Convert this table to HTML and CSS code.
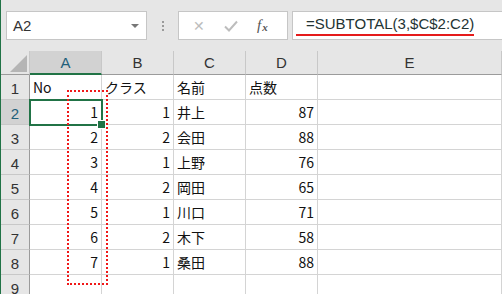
FILE: index.html
```html
<!DOCTYPE html>
<html lang="ja">
<head>
    <meta charset="UTF-8">
    <title>SUBTOTAL</title>
    <link rel="stylesheet" href="styles.css">
</head>
<body>
    <div class="app">
        <div class="formula-bar">
            <div class="name-box">
                <span>A2</span>
                <span class="drop"></span>
            </div>
            <div class="grip"><i></i><i></i><i></i></div>
            <div class="buttons">
                <span class="btn cancel">&#x2715;</span>
                <span class="btn enter">
                    <svg width="14" height="12" viewBox="0 0 14 12"><path d="M1 6.5 L5 10.5 L13 1.5" fill="none" stroke="#bdbdbd" stroke-width="2"/></svg>
                </span>
                <span class="btn fx"><i>f</i><small>x</small></span>
            </div>
            <div class="formula">
                <span class="mark">=SUBTOTAL(3,$C$2:C2)</span>
            </div>
        </div>

        <div class="sheet">
            <div class="corner"><span class="tri"></span></div>
            <div class="col-head active">A</div>
            <div class="col-head">B</div>
            <div class="col-head">C</div>
            <div class="col-head">D</div>
            <div class="col-head">E</div>

            <div class="row-head">1</div>
            <div class="cell">No</div>
            <div class="cell">クラス</div>
            <div class="cell">名前</div>
            <div class="cell">点数</div>
            <div class="cell"></div>

            <div class="row-head active">2</div>
            <div class="cell num selected">1</div>
            <div class="cell num">1</div>
            <div class="cell">井上</div>
            <div class="cell num">87</div>
            <div class="cell"></div>

            <div class="row-head">3</div>
            <div class="cell num">2</div>
            <div class="cell num">2</div>
            <div class="cell">会田</div>
            <div class="cell num">88</div>
            <div class="cell"></div>

            <div class="row-head">4</div>
            <div class="cell num">3</div>
            <div class="cell num">1</div>
            <div class="cell">上野</div>
            <div class="cell num">76</div>
            <div class="cell"></div>

            <div class="row-head">5</div>
            <div class="cell num">4</div>
            <div class="cell num">2</div>
            <div class="cell">岡田</div>
            <div class="cell num">65</div>
            <div class="cell"></div>

            <div class="row-head">6</div>
            <div class="cell num">5</div>
            <div class="cell num">1</div>
            <div class="cell">川口</div>
            <div class="cell num">71</div>
            <div class="cell"></div>

            <div class="row-head">7</div>
            <div class="cell num">6</div>
            <div class="cell num">2</div>
            <div class="cell">木下</div>
            <div class="cell num">58</div>
            <div class="cell"></div>

            <div class="row-head">8</div>
            <div class="cell num">7</div>
            <div class="cell num">1</div>
            <div class="cell">桑田</div>
            <div class="cell num">88</div>
            <div class="cell"></div>

            <div class="row-head">9</div>
            <div class="cell"></div>
            <div class="cell"></div>
            <div class="cell"></div>
            <div class="cell"></div>
            <div class="cell"></div>

            <div class="dotted-box"></div>
        </div>
    </div>
</body>
</html>
```

FILE: styles.css
```css
* {
    margin: 0;
    padding: 0;
    box-sizing: border-box;
}

body {
    width: 502px;
    height: 294px;
    overflow: hidden;
    background: #fff;
    font-family: 'Noto Sans CJK JP', 'Noto Sans', sans-serif;
    color: #222;
}

.app {
    height: 294px;
    border-left: 1px solid #217346;
    overflow: hidden;
}

/* formula bar */

.formula-bar {
    height: 51px;
    background: #e6e6e6;
    display: flex;
    align-items: flex-start;
    padding: 11px 0 0 5px;
}

.name-box {
    width: 141px;
    height: 29px;
    background: #fff;
    border: 1px solid #c6c6c6;
    display: flex;
    align-items: center;
    justify-content: space-between;
    padding: 0 7px 0 6px;
    font-family: 'Liberation Sans', sans-serif;
    font-size: 15px;
    color: #333;
}

.drop {
    width: 0;
    height: 0;
    border-left: 4px solid transparent;
    border-right: 4px solid transparent;
    border-top: 4px solid #777;
}

.grip {
    width: 31px;
    height: 29px;
    display: flex;
    flex-direction: column;
    align-items: center;
    justify-content: center;
    gap: 2px;
}

.grip i {
    width: 2px;
    height: 2px;
    background: #9a9a9a;
}

.buttons {
    width: 110px;
    height: 29px;
    background: #fff;
    border: 1px solid #c6c6c6;
    display: flex;
    align-items: center;
    padding-left: 12px;
}

.btn {
    width: 37px;
    display: flex;
    align-items: center;
    justify-content: center;
}

.cancel {
    color: #bdbdbd;
    font-family: 'DejaVu Sans', sans-serif;
    font-size: 14px;
    justify-content: flex-start;
    padding-left: 2px;
}

.enter {
    justify-content: flex-start;
    padding-left: 1px;
}

.fx {
    font-family: 'Liberation Serif', serif;
    color: #555;
    font-size: 15px;
    justify-content: flex-start;
    padding-left: 2px;
}

.fx small {
    font-size: 11px;
    font-style: italic;
    font-weight: bold;
    margin-left: 1px;
    margin-top: 3px;
}

.formula {
    flex: 1;
    height: 29px;
    margin-left: 4px;
    background: #fff;
    border: 1px solid #c6c6c6;
    border-right: none;
    padding-left: 3px;
    font-family: 'Liberation Sans', sans-serif;
    font-size: 15px;
    color: #233;
    display: flex;
    align-items: flex-start;
}

.mark {
    padding: 3px 0 1px 10px;
    border-bottom: 2px solid #e51b1b;
    line-height: 18px;
}

/* sheet */

.sheet {
    position: relative;
    display: grid;
    grid-template-columns: 29px 72px 72px 72px 72px 1fr;
    grid-template-rows: 24px;
    grid-auto-rows: 25px;
    font-size: 14px;
}

.corner {
    background: #e6e6e6;
    border-right: 1px solid #c8c8c8;
    border-bottom: 1px solid #9b9b9b;
    display: flex;
    align-items: flex-end;
    justify-content: flex-end;
    padding: 0 2px 2px 0;
}

.tri {
    width: 17px;
    height: 17px;
    background: #b5b5b5;
    clip-path: polygon(100% 0, 100% 100%, 0 100%);
}

.col-head {
    background: #e6e6e6;
    border-right: 1px solid #c8c8c8;
    border-bottom: 1px solid #9b9b9b;
    display: flex;
    align-items: center;
    justify-content: center;
    font-family: 'Liberation Sans', sans-serif;
    font-size: 15px;
    color: #333;
}

.col-head.active {
    background: #d2d2d2;
    border-bottom: 2px solid #217346;
    color: #1f5f7a;
}

.row-head {
    background: #e6e6e6;
    border-right: 1px solid #9b9b9b;
    border-bottom: 1px solid #c8c8c8;
    display: flex;
    align-items: center;
    justify-content: center;
    padding-top: 2px;
    font-family: 'Liberation Sans', sans-serif;
    font-size: 15px;
    color: #333;
}

.row-head.active {
    background: #d2d2d2;
    color: #1f5f7a;
}

.cell {
    border-right: 1px solid #d4d4d4;
    border-bottom: 1px solid #d4d4d4;
    display: flex;
    align-items: flex-end;
    padding: 0 3px 2px 3px;
    white-space: nowrap;
    color: #111;
    line-height: 20px;
}

.cell.num {
    justify-content: flex-end;
}

.selected {
    position: relative;
}

.selected::before {
    content: '';
    position: absolute;
    top: -1px;
    left: -1px;
    right: -2px;
    bottom: -2px;
    border: 2px solid #217346;
    z-index: 2;
}

.selected::after {
    content: '';
    position: absolute;
    right: -5px;
    bottom: -5px;
    width: 7px;
    height: 7px;
    background: #217346;
    border: 1px solid #fff;
    z-index: 3;
}

.dotted-box {
    position: absolute;
    left: 66px;
    top: 39px;
    width: 41px;
    height: 195px;
    border: 2px dotted #f01818;
    z-index: 4;
}
```
